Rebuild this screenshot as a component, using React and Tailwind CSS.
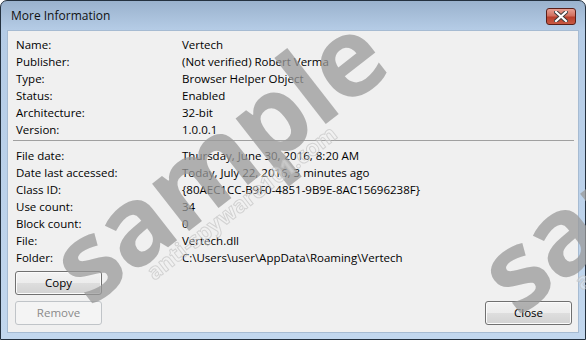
const rowsA = [
  ["Name:", "Vertech"],
  ["Publisher:", "(Not verified) Robert Verma"],
  ["Type:", "Browser Helper Object"],
  ["Status:", "Enabled"],
  ["Architecture:", "32-bit"],
  ["Version:", "1.0.0.1"],
];

const rowsB = [
  ["File date:", "Thursday, June 30, 2016, 8:20 AM"],
  ["Date last accessed:", "Today, July 22, 2016, 3 minutes ago"],
  ["Class ID:", "{80AEC1CC-B9F0-4851-9B9E-8AC15696238F}"],
  ["Use count:", "34"],
  ["Block count:", "0"],
  ["File:", "Vertech.dll"],
  ["Folder:", "C:\\Users\\user\\AppData\\Roaming\\Vertech"],
];

const InfoRows = ({ rows }) => (
  <div className="flex flex-col">
    {rows.map(([k, v]) => (
      <div key={k} className="flex h-[17px] items-center">
        <span className="w-[167px] pl-[1px]">{k}</span>
        <span>{v}</span>
      </div>
    ))}
  </div>
);

const Button = ({ children, disabled }) => (
  <button
    className={
      disabled
        ? "w-[87px] h-[24px] rounded-[3px] border border-[#c0c4c8] bg-[#f4f4f4] text-[#8a8a8a]"
        : "w-[87px] h-[24px] rounded-[3px] border border-[#707070] bg-[linear-gradient(#f3f3f3,#ececec_50%,#dedede_50%,#d2d2d2)] text-black shadow-[inset_0_0_0_1px_#fbfbfb]"
    }
  >
    {children}
  </button>
);

// watermark laid over the dialog
const Watermark = ({ className }) => (
  <div className={"absolute pointer-events-none select-none flex flex-col items-center " + className}>
    <span className="text-[110px] leading-none font-bold text-[#9a9a9a]/75 tracking-[-2px] mix-blend-multiply">sample</span>
    <span className="text-[22px] leading-none font-bold text-[#f6f6f6]/50 [-webkit-text-stroke:1px_#c6c6c6] opacity-70 ml-[-16px] mt-[-14px]">
      anti-spyware101.com
    </span>
  </div>
);

export default function App() {
  return (
    <div className="w-[586px] h-[340px] bg-white overflow-hidden relative" style={{ fontFamily: '"Segoe UI", "Open Sans", "Noto Sans", sans-serif' }}>
      <div className="w-full h-full rounded-t-[7px] border border-[#24313f] bg-[linear-gradient(#9ab2cd,#b5cce6_29px,#c2d7ee)] flex flex-col text-[11.5px] text-black">
        <div className="h-[29px] flex items-center justify-between pl-[10px] pr-[9px]">
          <span className="text-[12px] text-[#111] mt-[1px]">More Information</span>
          <div className="w-[30px] h-[17px] mt-[1px] rounded-[3px] border border-[#5a1f18] bg-[linear-gradient(#e8a093,#d2705f_45%,#b83f2c_55%,#c85a44)] flex items-center justify-center">
            <svg width="14" height="11" viewBox="0 0 14 11">
              <path d="M2 1 L12 10 M12 1 L2 10" stroke="#3a3a3a" strokeWidth="4" strokeLinecap="square" />
              <path d="M2 1 L12 10 M12 1 L2 10" stroke="#ffffff" strokeWidth="2.2" strokeLinecap="square" />
            </svg>
          </div>
        </div>
        <div className="mx-[6px] flex-1 bg-[#f0f0f0] flex flex-col pt-[5px] pl-[7px] pr-[6px] pb-[5px] border border-[#a6bbd2]">
          <InfoRows rows={rowsA} />
          <div className="h-px bg-[#a0a0a0] mt-[2px] mb-[6px] mx-[-2px]" />
          <InfoRows rows={rowsB} />
          <div className="mt-[5px]">
            <Button>Copy</Button>
          </div>
          <div className="mt-[6px] flex justify-between">
            <Button disabled>Remove</Button>
            <Button>Close</Button>
          </div>
        </div>
        <div className="h-[6px]" />
      </div>
      <Watermark className="left-[25px] top-[100px] -rotate-[38deg]" />
      <Watermark className="left-[453px] top-[110px] -rotate-[38deg]" />
    </div>
  );
}
